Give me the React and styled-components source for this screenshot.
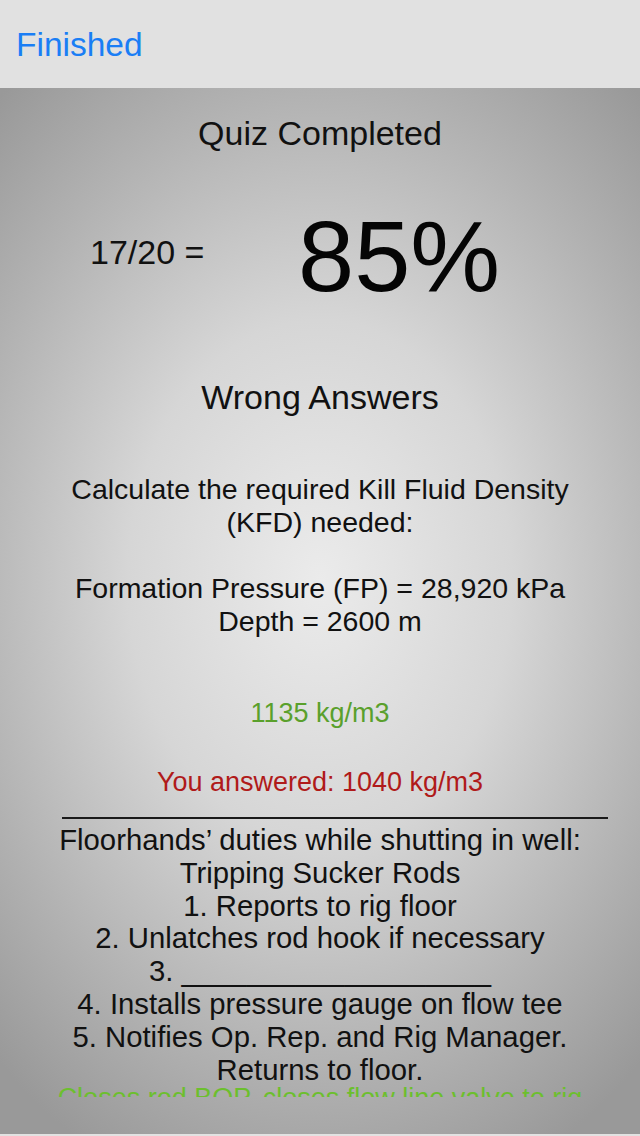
import React from 'react';
import styled, {createGlobalStyle} from 'styled-components';

const GlobalStyle = createGlobalStyle`
  html, body {
    margin: 0;
    padding: 0;
    background: #e2e2e2;
  }
  body {
    font-family: "Liberation Sans", Arial, sans-serif;
  }
`;

const Screen = styled.div`
  width: 640px;
  height: 1136px;
  display: flex;
  flex-direction: column;
  overflow: hidden;
  background: #e2e2e2;
`;

const NavBar = styled.div`
  height: 88px;
  flex-shrink: 0;
  display: flex;
  align-items: center;
  padding: 0 16px;
  background: #e1e1e1;
`;

const NavButton = styled.span`
  color: #1a7ef5;
  font-size: 33.5px;
  margin-top: 1px;
`;

const Board = styled.div`
  flex: 1;
  display: flex;
  flex-direction: column;
  align-items: center;
  margin-bottom: 2px;
  background: radial-gradient(ellipse 75% 62% at 50% 47%, #ebebeb 0%, #d6d6d6 40%, #b2b2b2 75%, #999 100%);
`;

const Title = styled.div`
  font-size: 34px;
  color: #111;
  text-align: center;
  margin-top: ${p => p.$top}px;
  line-height: 36px;
`;

const ScoreRow = styled.div`
  width: 100%;
  display: flex;
  align-items: center;
  margin-top: 40px;
  height: 130px;
`;

const Fraction = styled.div`
  font-size: 34px;
  color: #111;
  width: 298px;
  padding-left: 90px;
  margin-top: -8px;
  box-sizing: border-box;
`;

const Percent = styled.div`
  font-size: 101px;
  color: #050505;
`;

const Question = styled.div`
  margin-top: 58px;
  font-size: 28.5px;
  line-height: 33px;
  text-align: center;
  color: #111;
`;

const Answer = styled.div`
  font-size: 27px;
  line-height: 30px;
  text-align: center;
  color: ${p => p.$color};
  margin-top: ${p => p.$top}px;
`;

const Rule = styled.div`
  width: 546px;
  height: 2px;
  background: #1a1a1a;
  margin-top: 20px;
  margin-left: 30px;
`;

const Notes = styled.div`
  height: 273px;
  overflow: hidden;
  text-align: center;
  font-size: 29.3px;
  line-height: 32.8px;
  color: #111;
  margin-top: 5px;
`;

const NoteLine = styled.div`
  color: #111;
  white-space: nowrap;
`;

const AnswerLine = styled.div`
  color: #6cbf2e;
  font-size: 27px;
  white-space: nowrap;
  margin-top: -4px;
`;

const notes = [
  'Floorhands\u2019 duties while shutting in well:',
  'Tripping Sucker Rods',
  '1. Reports to rig floor',
  '2. Unlatches rod hook if necessary',
  '3. ___________________',
  '4. Installs pressure gauge on flow tee',
  '5. Notifies Op. Rep. and Rig Manager.',
  'Returns to floor.',
];

export default function App() {
  return (
    <Screen>
      <GlobalStyle/>
      <NavBar>
        <NavButton>Finished</NavButton>
      </NavBar>
      <Board>
        <Title $top={27}>Quiz Completed</Title>
        <ScoreRow>
          <Fraction>17/20 =</Fraction>
          <Percent>85%</Percent>
        </ScoreRow>
        <Title $top={58}>Wrong Answers</Title>
        <Question>
          Calculate the required Kill Fluid Density<br/>
          (KFD) needed:<br/>
          <br/>
          Formation Pressure (FP) = 28,920 kPa<br/>
          Depth = 2600 m
        </Question>
        <Answer $color="#5aa02c" $top={60}>1135 kg/m3</Answer>
        <Answer $color="#b01a1a" $top={39}>You answered: 1040 kg/m3</Answer>
        <Rule/>
        <Notes>
          {notes.map(line => <NoteLine key={line}>{line}</NoteLine>)}
          <AnswerLine>Closes rod BOP, closes flow line valve to rig</AnswerLine>
        </Notes>
      </Board>
    </Screen>
  );
}
